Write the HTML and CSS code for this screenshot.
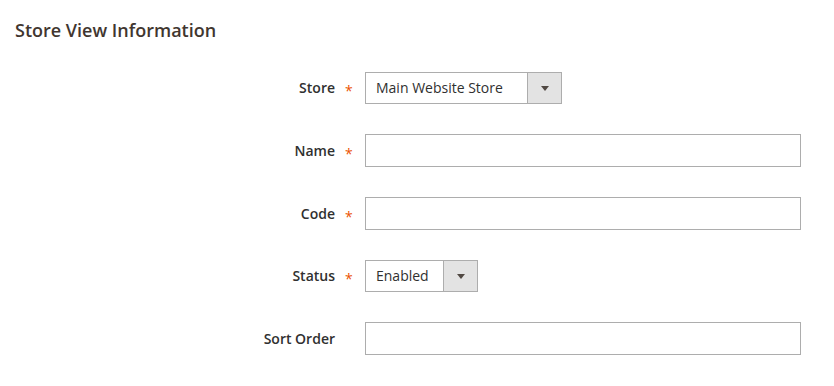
FILE: index.html
```html
<!DOCTYPE html>
<html lang="en">
<head>
    <meta charset="utf-8">
    <title>Store View Information</title>
    <link rel="stylesheet" href="styles.css">
</head>
<body>
    <fieldset class="store-fieldset">
        <legend class="legend">Store View Information</legend>

        <div class="field required">
            <label class="label">Store</label>
            <span class="asterisk">*</span>
            <div class="select store-select">
                <span class="select-value">Main Website Store</span>
                <span class="select-arrow"></span>
            </div>
        </div>

        <div class="field required">
            <label class="label">Name</label>
            <span class="asterisk">*</span>
            <input class="input" type="text">
        </div>

        <div class="field required">
            <label class="label">Code</label>
            <span class="asterisk">*</span>
            <input class="input" type="text">
        </div>

        <div class="field required">
            <label class="label">Status</label>
            <span class="asterisk">*</span>
            <div class="select status-select">
                <span class="select-value">Enabled</span>
                <span class="select-arrow"></span>
            </div>
        </div>

        <div class="field">
            <label class="label">Sort Order</label>
            <span class="asterisk"></span>
            <input class="input" type="text">
        </div>
    </fieldset>
</body>
</html>
```

FILE: styles.css
```css
body {
    margin: 0;
    padding: 0;
    background-color: #fff;
    color: #303030;
    font-family: 'Open Sans', sans-serif;
    font-size: 14px;
}

.store-fieldset {
    border: 0;
    margin: 0;
    padding: 0 15px;
}

.legend {
    float: left;
    width: 100%;
    padding: 17px 0 0;
    margin: 0 0 28px;
    font-size: 18px;
    font-weight: 600;
    color: #41362f;
    line-height: 26px;
}

.field {
    clear: both;
    display: grid;
    grid-template-columns: 320px 30px 436px;
    align-items: center;
    height: 33px;
    margin-bottom: 29.75px;
}

.label {
    text-align: right;
    font-weight: 600;
    color: #303030;
}

.asterisk {
    color: #eb5202;
    font-size: 14px;
    padding-left: 10px;
    padding-top: 6px;
}

.input {
    box-sizing: border-box;
    height: 33px;
    width: 436px;
    border: 1px solid #adadad;
    background: #fff;
    margin: 0;
    padding: 0 10px;
    font-family: inherit;
}

.select {
    box-sizing: border-box;
    display: flex;
    height: 32px;
    border: 1px solid #adadad;
    background: #fff;
}

.store-select {
    width: 197px;
}

.status-select {
    width: 113px;
}

.select-value {
    flex: 1;
    padding-left: 10px;
    line-height: 30px;
    color: #303030;
}

.select-arrow {
    position: relative;
    width: 33px;
    border-left: 1px solid #adadad;
    background: #e3e3e3;
}

.select-arrow::after {
    content: "";
    position: absolute;
    left: 50%;
    top: 50%;
    margin: -2px 0 0 -4px;
    border: 4px solid transparent;
    border-top: 5px solid #514943;
    border-bottom: 0;
}
```
